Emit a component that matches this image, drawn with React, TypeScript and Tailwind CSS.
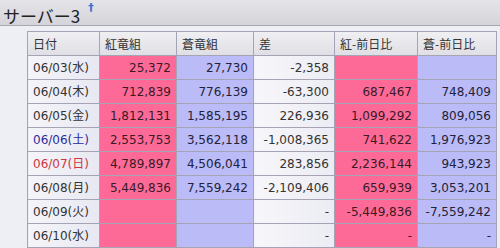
import React from "react";

type Row = { d: string; c?: string; a: string; b: string; diff: string; ar: string; br: string };

const rows: Row[] = [
  { d: "06/03(水)", a: "25,372", b: "27,730", diff: "-2,358", ar: "", br: "" },
  { d: "06/04(木)", a: "712,839", b: "776,139", diff: "-63,300", ar: "687,467", br: "748,409" },
  { d: "06/05(金)", a: "1,812,131", b: "1,585,195", diff: "226,936", ar: "1,099,292", br: "809,056" },
  { d: "06/06(土)", c: "text-[#2b2b9c]", a: "2,553,753", b: "3,562,118", diff: "-1,008,365", ar: "741,622", br: "1,976,923" },
  { d: "06/07(日)", c: "text-[#d0343c]", a: "4,789,897", b: "4,506,041", diff: "283,856", ar: "2,236,144", br: "943,923" },
  { d: "06/08(月)", a: "5,449,836", b: "7,559,242", diff: "-2,109,406", ar: "659,939", br: "3,053,201" },
  { d: "06/09(火)", a: "", b: "", diff: "-", ar: "-5,449,836", br: "-7,559,242" },
  { d: "06/10(水)", a: "", b: "", diff: "-", ar: "-", br: "-" },
];

const font = { fontFamily: "'DejaVu Sans', 'Noto Sans CJK JP', sans-serif" };

export default function App() {
  const cell = "border border-[#a4a4b4] px-[5px] h-[24px] text-[12px] leading-none whitespace-nowrap";
  return (
    <div className="w-[500px] h-[248px] overflow-hidden bg-[#eeeef5]" style={font}>
      <div className="h-[26px] bg-gradient-to-b from-[#e4e4e8] to-[#d4d4da] border-b border-[#a8a8b0] flex items-start pl-[3px]">
        <span className="text-[17px] leading-none mt-[7px] text-[#222]" style={{ fontFamily: "'Noto Sans CJK JP', 'DejaVu Sans', sans-serif" }}>
          サーバー3
        </span>
        <span className="text-[11px] leading-none mt-[2px] ml-[8px] text-[#3a6fd0] font-bold">†</span>
      </div>
      <div className="pl-[27px] pt-[5px]">
        <table className="border-collapse table-fixed w-[469px]">
          <colgroup>
            <col className="w-[72px]" />
            <col className="w-[77px]" />
            <col className="w-[77px]" />
            <col className="w-[81px]" />
            <col className="w-[83px]" />
            <col className="w-[79px]" />
          </colgroup>
          <thead>
            <tr className="bg-gradient-to-b from-[#f0f0f3] to-[#dedee4] text-[#333]">
              {["日付", "紅竜組", "蒼竜組", "差", "紅-前日比", "蒼-前日比"].map((h) => (
                <th key={h} className={`${cell} text-left font-normal`} style={{ fontFamily: "'Noto Sans CJK JP', sans-serif" }}>
                  {h}
                </th>
              ))}
            </tr>
          </thead>
          <tbody>
            {rows.map((r) => (
              <tr key={r.d}>
                <td className={`${cell} text-left bg-gradient-to-r from-[#f4f4f9] to-[#e8e8f2] ${r.c ?? "text-[#333]"}`}>{r.d}</td>
                <td className={`${cell} text-right bg-[#fd6a98] text-[#3a1a26]`}>{r.a}</td>
                <td className={`${cell} text-right bg-[#bbbbf8] text-[#22223a]`}>{r.b}</td>
                <td className={`${cell} text-right bg-gradient-to-r from-[#f6f6fa] to-[#ececf4] text-[#333]`}>{r.diff}</td>
                <td className={`${cell} text-right bg-[#fd6a98] text-[#3a1a26]`}>{r.ar}</td>
                <td className={`${cell} text-right bg-[#bbbbf8] text-[#22223a]`}>{r.br}</td>
              </tr>
            ))}
          </tbody>
        </table>
      </div>
    </div>
  );
}
